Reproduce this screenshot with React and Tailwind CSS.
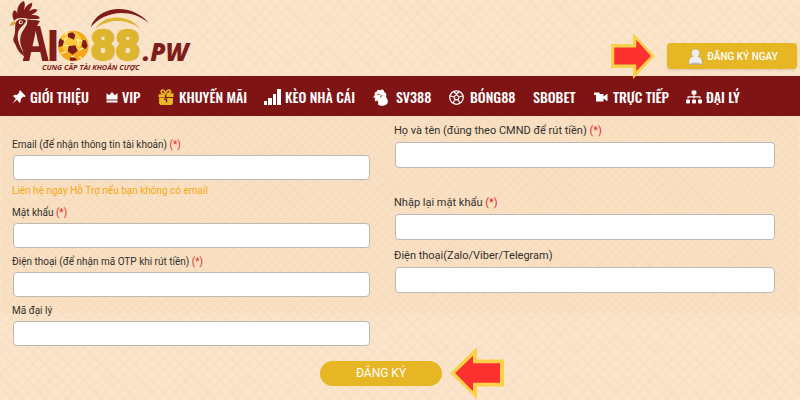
import { FaSitemap } from "react-icons/fa";

const PinIcon = () => (
  <svg viewBox="0 0 40 40" className="size-[14px] shrink-0 fill-current" aria-hidden="true">
    <path d="M23 1l16 16-3 3-4-1-7 7c1 4 0 8-3 11l-8-9L1 39l10-14-8-8c3-3 7-4 11-3l7-7-1-3z" />
  </svg>
);

const CrownIcon = () => (
  <svg viewBox="0 0 24 24" className="size-3 shrink-0 fill-current" aria-hidden="true">
    <path d="M1 4l3 3 3 1 5-6 5 6 3-1 3-3v13H1z M1 19h22v4H1z" />
  </svg>
);

const GiftIcon = () => (
  <svg viewBox="0 0 30 30" className="size-4 shrink-0" aria-hidden="true">
    <path d="M12 9C5 10 4 2 9 2c3 0 4 4 5 6 1-4 7-8 9-5s-2 5-6 6" fill="none" stroke="#e8b923" strokeWidth="3" />
    <path d="M1 10h12v6H1z M16 8h13v7H16z M2 17h26v10l-3 3H5l-3-3z" fill="#e8b923" />
    <path d="M11 19h5v6" fill="none" stroke="#7f1414" strokeWidth="2.5" />
  </svg>
);

const SignalIcon = () => (
  <svg viewBox="0 0 17 16" className="h-4 w-[17px] shrink-0 fill-current" aria-hidden="true">
    <path d="M0 12h3v4H0z M4 9h4v7H4z M9 5h3v11H9z M13 0h4v16h-4z" />
  </svg>
);

const RoosterIcon = () => (
  <svg viewBox="0 0 30 34" className="h-[17px] w-[15px] shrink-0" aria-hidden="true">
    <path
      d="M4 12C2 8 4 6 7 7c0-5 4-7 7-4 4-4 9-1 8 3 5 1 5 6 4 10 4 5 5 11 2 14-5 5-14 4-18 1 1-4 0-7-2-9 0 3-3 4-4 1s0-4 1-6l-4 1c0-3 1-5 3-6z"
      fill="#fff"
    />
    <path d="M8 11c3-1 5-1 7 1M14 16c3 0 4-2 4-4" fill="none" stroke="#7f1414" strokeWidth="1.5" />
  </svg>
);

const BallIcon = () => (
  <svg viewBox="0 0 30 30" className="size-[15px] shrink-0" aria-hidden="true">
    <circle cx="15" cy="15" r="13.5" fill="none" stroke="#fff" strokeWidth="2.5" />
    <path d="M15 8l7 5-3 8h-8l-3-8z" fill="#fff" />
    <path d="M15 11l4 3-2 4h-4l-2-4z" fill="#7f1414" />
    <path d="M15 8l-5-4M15 8l5-4M22 13l6-1M19 21l3 5M11 21l-3 5M8 13l-6-1" stroke="#fff" strokeWidth="2.5" />
  </svg>
);

const CameraIcon = () => (
  <svg viewBox="0 0 28 20" className="h-[10px] w-[14px] shrink-0 fill-current" aria-hidden="true">
    <path d="M0 1h11v3h8v5l7-5h1v14h-1l-7-5v6H4V6H0z" />
  </svg>
);

const TreeIcon = () => <FaSitemap className="size-4 shrink-0" aria-hidden="true" />;

const navItems = [
  { label: "GIỚI THIỆU", icon: PinIcon, gap: "gap-1" },
  { label: "VIP", icon: CrownIcon, gap: "gap-1" },
  { label: "KHUYẾN MÃI", icon: GiftIcon, gap: "gap-[5px]" },
  { label: "KÈO NHÀ CÁI", icon: SignalIcon, gap: "gap-1" },
  { label: "SV388", icon: RoosterIcon, gap: "gap-2" },
  { label: "BÓNG88", icon: BallIcon, gap: "gap-[6px]" },
  { label: "SBOBET" },
  { label: "TRỰC TIẾP", icon: CameraIcon, gap: "gap-[5px]" },
  { label: "ĐẠI LÝ", icon: TreeIcon, gap: "gap-1" },
];

const Logo = () => (
  <svg viewBox="0 0 600 228" className="h-[76px] w-[200px]" role="img" aria-label="Alo88.pw">
    {/* comb */}
    <path
      d="M42 62C36 48 36 38 43 31c5 1 8 5 9 10-1-16 4-31 19-38 6 8 3 18 1 27 5-11 13-19 24-22 3 9-5 18-9 26 7-6 17-10 25-5-2 9-12 11-19 17 9-2 20-1 27 7-9 7-20 3-31 4-19-3-36-7-47 5z"
      fill="#7f1d1a"
    />
    {/* head and neck feathers */}
    <path d="M46 70c4-13 22-18 33-8-4 18-19 22-21 43-3 23 3 44 22 68-16-8-28-21-33-38-5-7-8-12-7-20 7-13 5-29 6-45z" fill="#7f1d1a" />
    <path d="M82 58c12 4 24 0 38 5l-20 34-20 77C64 153 56 127 63 105c4-17 21-24 19-47z" fill="#7f1d1a" />
    <path d="M79 60c-1 20-18 24-20 45-2 17 2 33 12 50-15-20-20-38-17-56 3-17 18-20 25-39z" fill="#fbe5c9" />
    <path d="M30 79c2-11 8-15 18-13l-6 9c-5-1-8 1-12 4z" fill="#d9a520" />
    <circle cx="62" cy="67" r="6" fill="#fbe5c9" />
    <circle cx="63" cy="67" r="3" fill="#5c1210" />
    <text y="183" fontFamily="Roboto, sans-serif" fontWeight="900" fill="#7f1d1a">
      <tspan x="68" fontFamily="Open Sans Condensed, Oswald, sans-serif" fontWeight="700" fontSize="146">A</tspan>
      <tspan x="142" fontSize="124">l</tspan>
    </text>
    {/* arcs */}
    <path d="M272 82C293 18 390 6 446 68C389 22 311 33 272 82z" fill="#7f1d1a" />
    <path d="M286 86C313 42 385 40 421 86C380 55 325 55 286 86z" fill="#ddb52e" />
    {/* ball */}
    <circle cx="220" cy="138" r="49" fill="#fbe5c9" />
    <circle cx="220" cy="138" r="46" fill="#f5a81c" />
    <circle cx="213" cy="126" r="32" fill="#fbc93a" />
    <path
      d="M205 109l-13 14m40-5l5 19m16-13l-24-6m-40 18l15 1m33 14l14-9m-29 26l-12 6m28-4l7 5m-46-20l-17 6m14-57l8-12"
      fill="none"
      stroke="#fff0a8"
      strokeWidth="4"
    />
    <path
      d="M203 111l19 8 4-14-8-8-13 3zM180 115l12 8-4 15-12 3 0-16zM206 139l20-3 7 16-15 12-15-10zM248 120l9 1 6 17-7 10-11-8zM209 172l16 1 7 8-21 2z"
      fill="#7f1d1a"
    />
    <text x="272" y="181" fontFamily="Roboto, sans-serif" fontWeight="900" fontSize="128" fill="#ddb52e" stroke="#ddb52e" strokeWidth="7" strokeLinejoin="round">88</text>
    <text x="428" y="183" fontFamily="Open Sans, sans-serif" fontWeight="800" fontStyle="italic" fontSize="74" fill="#7f1d1a">.PW</text>
    <text x="126" y="209" fontFamily="Open Sans, sans-serif" fontWeight="700" fontStyle="italic" fontSize="22" fill="#7f1d1a">CUNG CẤP TÀI KHOẢN CƯỢC</text>
  </svg>
);

const Field = ({ id, label, type = "text", required, hint, wide }) => (
  <div className="flex flex-col">
    <label htmlFor={id} className={`leading-4 text-[#33302c] ${wide ? "text-[11px]" : "text-[10px]"}`}>
      {label} {required && <span className="text-[#e02b27]">(*)</span>}
    </label>
    <input
      id={id}
      type={type}
      className={`ml-px rounded-[4px] border border-[#bdb8b2] bg-white px-2 text-xs outline-none focus:border-[#e6b625] ${
        wide ? "mt-[3px] h-[26px]" : "mt-[2px] h-[25px]"
      }`}
    />
    {hint && <p className="mt-[3px] text-[10px] leading-4 text-[#f5a80f]">{hint}</p>}
  </div>
);

const ArrowShape = ({ className }) => (
  <svg viewBox="0 0 54 54" className={className} preserveAspectRatio="none" aria-hidden="true">
    <path d="M0 27L27 0v13h27v28H27v13z" fill="#fbd14b" />
    <path d="M5 27L23 9v8h27v20H23v9z" fill="#fe3131" />
  </svg>
);

const App = () => {
  return (
    <div className="min-h-screen overflow-hidden bg-[#fae4ca] bg-[repeating-linear-gradient(45deg,#f3d9bc55_0px,#f3d9bc55_2px,transparent_2px,transparent_8px),repeating-linear-gradient(135deg,#f3d9bc44_0px,#f3d9bc44_2px,transparent_2px,transparent_8px)] font-[Roboto,sans-serif]">
      <header className="flex items-start justify-between">
        <a href="#" className="block">
          <Logo />
        </a>
        <div className="relative z-10 -mb-1 flex items-center gap-3 pt-[33px] pr-[3px]">
          <ArrowShape className="h-[46px] w-11 rotate-180" />
          <button
            type="button"
            className="flex h-[26px] w-[130px] items-center justify-center gap-1 rounded-[4px] bg-[#e6b625] pl-0.5 text-[10px] font-medium text-white shadow-sm"
          >
            <svg viewBox="0 0 30 34" className="h-[17px] w-[15px]" aria-hidden="true">
              <path d="M2 33c-2-10 2-15 8-16-6-5-4-15 5-15s11 10 5 15c6 1 10 6 8 16z" fill="#eee" stroke="#a7925b" strokeWidth="1" />
              <path d="M3 32c5-4 19-4 24 0z" fill="#bbb" />
            </svg>
            ĐĂNG KÝ NGAY
          </button>
        </div>
      </header>

      <nav className="bg-[#7f1414] font-['Oswald','Roboto_Condensed','Liberation_Sans_Narrow',sans-serif]">
        <ul className="grid grid-cols-[94fr_52fr_106fr_109fr_76fr_84fr_61fr_92fr_114fr] pl-3">
          {navItems.map(({ label, icon: Icon, gap }) => (
            <li key={label}>
              <a href="#" className={`flex h-10 items-center pt-[2px] text-sm font-medium whitespace-nowrap text-white ${gap || ""}`}>
                {Icon && <Icon />}
                {label}
              </a>
            </li>
          ))}
        </ul>
      </nav>

      <form className="relative">
        <div className="absolute inset-x-px top-0 h-[197px] bg-[#f9e0c3] bg-[repeating-linear-gradient(45deg,#f2d5b366_0px,#f2d5b366_1px,transparent_1px,transparent_6px),repeating-linear-gradient(135deg,#f2d5b366_0px,#f2d5b366_1px,transparent_1px,transparent_6px)]" />
        <div className="relative grid grid-cols-[358fr_381fr] gap-6 pr-[25px] pl-3">
          <div className="flex flex-col gap-[6px] pt-[21px]">
            <Field id="email" type="email" label="Email (để nhận thông tin tài khoản)" required hint="Liên hệ ngay Hỗ Trợ nếu bạn không có email" />
            <Field id="password" type="password" label="Mật khẩu" required />
            <Field id="phone" type="tel" label="Điện thoại (để nhận mã OTP khi rút tiền)" required />
            <Field id="agent" label="Mã đại lý" />
          </div>
          <div className="flex flex-col pt-[7px]">
            <Field id="fullname" label="Họ và tên (đúng theo CMND để rút tiền)" required wide />
            <div className="mt-[27px] flex flex-col gap-2">
              <Field id="confirm" type="password" label="Nhập lại mật khẩu" required wide />
              <Field id="chat" label="Điện thoại(Zalo/Viber/Telegram)" wide />
            </div>
          </div>
        </div>
        <div className="relative flex items-center gap-2 pt-px pl-[40%]">
          <button type="submit" className="h-[25px] w-[122px] rounded-full bg-[#e6b625] text-xs text-white">
            ĐĂNG KÝ
          </button>
          <ArrowShape className="h-[52px] w-[54px]" />
        </div>
      </form>
    </div>
  );
};

export default App;
